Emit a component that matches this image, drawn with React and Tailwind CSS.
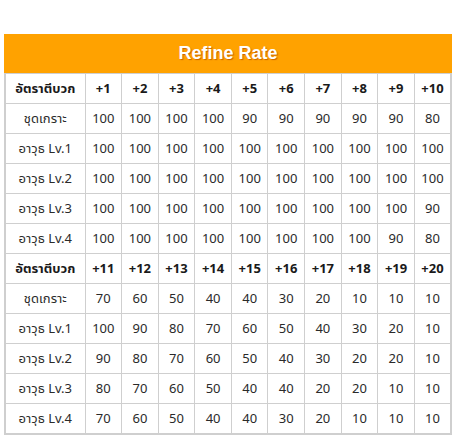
const LEVELS_A = ["+1", "+2", "+3", "+4", "+5", "+6", "+7", "+8", "+9", "+10"];
const LEVELS_B = ["+11", "+12", "+13", "+14", "+15", "+16", "+17", "+18", "+19", "+20"];

const ROWS_A = [
  ["ชุดเกราะ", [100, 100, 100, 100, 90, 90, 90, 90, 90, 80]],
  ["อาวุธ Lv.1", [100, 100, 100, 100, 100, 100, 100, 100, 100, 100]],
  ["อาวุธ Lv.2", [100, 100, 100, 100, 100, 100, 100, 100, 100, 100]],
  ["อาวุธ Lv.3", [100, 100, 100, 100, 100, 100, 100, 100, 100, 90]],
  ["อาวุธ Lv.4", [100, 100, 100, 100, 100, 100, 100, 100, 90, 80]],
];

const ROWS_B = [
  ["ชุดเกราะ", [70, 60, 50, 40, 40, 30, 20, 10, 10, 10]],
  ["อาวุธ Lv.1", [100, 90, 80, 70, 60, 50, 40, 30, 20, 10]],
  ["อาวุธ Lv.2", [90, 80, 70, 60, 50, 40, 30, 20, 20, 10]],
  ["อาวุธ Lv.3", [80, 70, 60, 50, 40, 40, 20, 20, 10, 10]],
  ["อาวุธ Lv.4", [70, 60, 50, 40, 40, 30, 20, 10, 10, 10]],
];

const cell = "border border-[#cfcfcf] h-[30px] p-0 text-center align-middle";

function Block({ levels, rows }) {
  return (
    <>
      <tr>
        <th className={`${cell} font-bold text-[13px] text-[#1a1a1a]`}>อัตราตีบวก</th>
        {levels.map(l => (
          <th key={l} className={`${cell} font-bold text-[13px] text-[#1a1a1a]`}>{l}</th>
        ))}
      </tr>
      {rows.map(([name, vals]) => (
        <tr key={name}>
          <td className={`${cell} text-[13px] text-[#2a2a2a]`}>{name}</td>
          {vals.map((v, i) => (
            <td key={i} className={`${cell} text-[13px] text-[#2a2a2a]`}>{v}</td>
          ))}
        </tr>
      ))}
    </>
  );
}

export default function App() {
  return (
    <div className="w-[459px] h-[441px] bg-white pt-[34px] pl-[4px]">
      <div className="w-[448px]">
        <div
          className="h-[39px] bg-[#ffa200] flex items-center justify-center text-white font-bold text-[18px] [text-shadow:1px_1px_1px_rgba(150,40,0,0.5)]"
          style={{ fontFamily: '"Liberation Sans", Arial, sans-serif' }}
        >
          Refine Rate
        </div>
        <table
          className="w-[448px] table-fixed border-collapse border-l-2 border-r-2 border-b-2 border-[#cfcfcf]"
          style={{ fontFamily: '"Noto Sans", "Noto Sans Thai", "DejaVu Sans", sans-serif' }}
        >
          <colgroup>
            <col className="w-[80px]" />
            {LEVELS_A.map(l => <col key={l} />)}
          </colgroup>
          <tbody>
            <Block levels={LEVELS_A} rows={ROWS_A} />
            <Block levels={LEVELS_B} rows={ROWS_B} />
          </tbody>
        </table>
      </div>
    </div>
  );
}
